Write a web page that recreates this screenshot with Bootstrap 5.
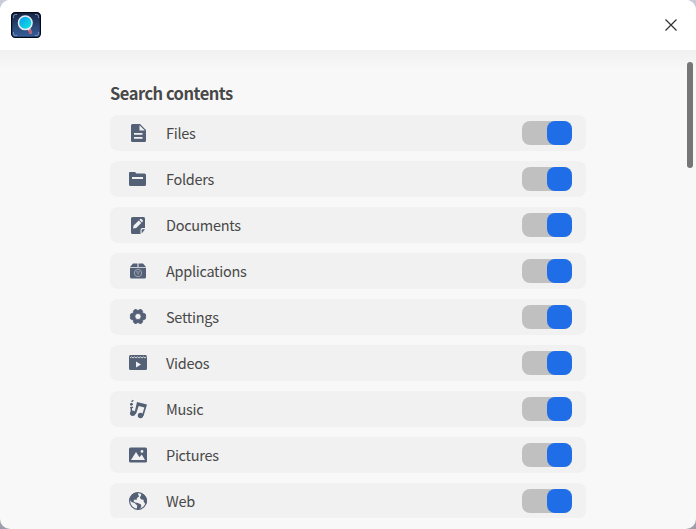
<!DOCTYPE html>
<html lang="en">
<head>
<meta charset="utf-8">
<meta name="viewport" content="width=device-width, initial-scale=1">
<title>Search settings</title>
<link href="https://cdn.jsdelivr.net/npm/bootstrap@5.3.0/dist/css/bootstrap.min.css" rel="stylesheet">
<style>
body{height:529px;background:linear-gradient(#c9cadc,#9c9eab);font-family:"Noto Sans CJK SC","Noto Sans",sans-serif;color:#484848}
.window{height:529px;border-radius:10px;background:#f8f8f8}
.titlebar{height:50px;background:#fff;padding:0 18px 0 11px}
.close-btn{width:14px;height:14px;line-height:0}
.viewport{height:468px;padding:31px 110px 0;background:linear-gradient(#f0f0f0,#f8f8f8 20px)}
.heading{font-size:16.500px;line-height:24px;height:34px;font-weight:700;letter-spacing:-.5px}
.option{height:36px;flex:none;border-radius:8px;background:#f1f1f1;padding:0 14px 0 18px;margin-bottom:10px;font-size:14.500px}
.option svg{width:20px;height:20px;fill:#536076;flex:none}
.option-name{margin-left:18px;line-height:22px;letter-spacing:-.28px}
.option .form-check-input{width:50px;height:24px;margin:0;border:0;border-radius:8px;background:#c0c0c0;box-shadow:none;appearance:none;display:flex;justify-content:flex-end}
.option .form-check-input:checked{background:#c0c0c0}
.option .form-check-input::after{content:"";width:25px;height:24px;border-radius:8px;background:#1f6ee7}
.scroll-thumb{right:3px;top:62px;width:6px;height:106px;border-radius:3px;background:#767676}
</style>
<script src="https://cdn.jsdelivr.net/npm/bootstrap@5.3.0/dist/js/bootstrap.bundle.min.js"></script>
</head>
<body class="overflow-hidden m-0">
<div class="window position-relative overflow-hidden">
<header class="titlebar d-flex align-items-center justify-content-between">
<svg width="30" height="26" viewBox="0 0 30 26" aria-hidden="true">
<defs><linearGradient id="bg" x2="0" y2="1"><stop stop-color="#172444"/><stop offset="1" stop-color="#38619c"/></linearGradient>
<linearGradient id="lens" x2="1" y2="1"><stop stop-color="#0797f2"/><stop offset="1" stop-color="#12ecdc"/></linearGradient></defs>
<rect x=".6" y=".6" width="28.8" height="24.8" rx="3.6" fill="url(#bg)" stroke="#050a18" stroke-width="1.2"/>
<path d="M2.500 6V4.500a2 2 0 0 1 2-2H6M24 2.500h1.500a2 2 0 0 1 2 2V6M2.500 20v1.500a2 2 0 0 0 2 2H6M24 23.500h1.500a2 2 0 0 0 2-2V20" fill="none" stroke="#7893bd"/>
<path d="M17.800 16.500l1.800 4" stroke="#f0a0a0" stroke-width="3" stroke-linecap="round"/>
<path d="M18.900 19l.8 1.500" stroke="#b8607c" stroke-width="3" stroke-linecap="round"/>
<circle cx="14.300" cy="10.800" r="6.800" fill="url(#lens)" stroke="#e4ebf2" stroke-width="1.500"/>
</svg>
<a class="close-btn" href="#" aria-label="Close"><svg width="14" height="14"><path d="M1.500 1.500l11 11M12.500 1.500l-11 11" stroke="#303030" stroke-width="1.200" fill="none"/></svg></a>
</header>
<main class="viewport overflow-hidden">
<h1 class="heading m-0">Search contents</h1>
<div class="d-flex flex-column">
<label class="option d-flex align-items-center"><svg viewBox="0 0 20 20"><path fill-rule="evenodd" d="M4.500 1H12l6 6v10.500a1.500 1.500 0 0 1-1.500 1.500h-12A1.500 1.500 0 0 1 3 17.500v-15A1.500 1.500 0 0 1 4.500 1zM11.500 2.200V7.500h5.300zM6 10v1.700h8.500V10zm0 4v1.700h8.500V14z"/></svg><span class="option-name">Files</span><input class="form-check-input ms-auto" type="checkbox" role="switch" checked></label>
<label class="option d-flex align-items-center"><svg viewBox="0 0 20 20"><path fill-rule="evenodd" d="M2 3h5l1.500 1.500H16.500A1.500 1.500 0 0 1 18 6v9.500a1.500 1.500 0 0 1-1.500 1.500h-14A1.500 1.500 0 0 1 1 15.500V4a1 1 0 0 1 1-1zM4 8v2h11V8z"/></svg><span class="option-name">Folders</span><input class="form-check-input ms-auto" type="checkbox" role="switch" checked></label>
<label class="option d-flex align-items-center"><svg viewBox="0 0 20 20"><path fill-rule="evenodd" d="M4.500 2h11A1.500 1.500 0 0 1 17 3.500V13h-2.500a2 2 0 0 0-2 2v4h-8A1.500 1.500 0 0 1 3 17.500v-14A1.500 1.500 0 0 1 4.500 2zM5 13.500l3.200-.6L13.300 8 10.800 5.500 5.600 10.600zM11.500 4.900l2.500 2.500.7-.8a1 1 0 0 0 0-1.300l-1.200-1.200a1 1 0 0 0-1.300 0z"/><path d="M13.700 18.500v-3.200a1 1 0 0 1 1-1H17z"/></svg><span class="option-name">Documents</span><input class="form-check-input ms-auto" type="checkbox" role="switch" checked></label>
<label class="option d-flex align-items-center"><svg viewBox="0 0 20 20"><path d="M5 2.500h4.500V6H2zM10.500 2.500H15L18 6h-7.500z"/><path d="M2 6.800h16V16a1.500 1.500 0 0 1-1.500 1.500h-13A1.500 1.500 0 0 1 2 16z"/><circle cx="10" cy="12" r="3.700" fill="none" stroke="#a3abb8" stroke-width=".9"/><path d="M8 10.800h4M10 12v2M8.400 11l1.600 1.500 1.600-1.500" fill="none" stroke="#a3abb8" stroke-width=".7"/></svg><span class="option-name">Applications</span><input class="form-check-input ms-auto" type="checkbox" role="switch" checked></label>
<label class="option d-flex align-items-center"><svg viewBox="0 0 20 20"><path fill-rule="evenodd" stroke="#536076" stroke-width=".8" d="M7 2.600q1.300-.8 1.900.5 1.100.7 2.200 0 .6-1.300 1.900-.5l1.200.8q.8.600.2 1.800.4 1.100 1.700 1.300 1.600.1 1.500 1.500v3q.1 1.400-1.500 1.500-1.300.2-1.700 1.300.6 1.200-.2 1.800l-1.200.8q-1.300.8-1.900-.5-1.100-.7-2.200 0-.6 1.300-1.900.5l-1.200-.8q-.8-.6-.2-1.800-.4-1.100-1.700-1.300-1.600-.1-1.500-1.500V8q-.1-1.400 1.500-1.500 1.300-.2 1.700-1.300-.6-1.200.2-1.800zM10 6.400a3.100 3.100 0 1 0 0 6.200 3.100 3.100 0 0 0 0-6.200z"/></svg><span class="option-name">Settings</span><input class="form-check-input ms-auto" type="checkbox" role="switch" checked></label>
<label class="option d-flex align-items-center"><svg viewBox="0 0 20 20"><path fill-rule="evenodd" d="M2.500 2h15A1.500 1.500 0 0 1 19 3.500v12a1.500 1.500 0 0 1-1.500 1.500h-15A1.500 1.500 0 0 1 1 15.500v-12A1.500 1.500 0 0 1 2.500 2zM8 8.500v6l5-3z"/><path d="M2 5L3.500 3.800 5 5l1.500-1.200L8 5l1.500-1.200L11 5l1.500-1.200L14 5l1.500-1.200L17 5l1.500-1.200" fill="none" stroke="#d8dbe0" stroke-width="1"/></svg><span class="option-name">Videos</span><input class="form-check-input ms-auto" type="checkbox" role="switch" checked></label>
<label class="option d-flex align-items-center"><svg viewBox="0 0 20 20"><path d="M9 3L19 5.500 15.500 17h-1.800l2.700-8.600-5.700-1.400L8 15H6.200z"/><circle cx="4.700" cy="14.200" r="2.700"/><circle cx="12.500" cy="16.500" r="2.700"/><path d="M3.300 12V8.500M2.200 8.700l2.800-.5M3.300 6.800V4M2 5.300h3M3.500 2.800L5.300 1.300" stroke="#536076" stroke-width="1.400" fill="none"/></svg><span class="option-name">Music</span><input class="form-check-input ms-auto" type="checkbox" role="switch" checked></label>
<label class="option d-flex align-items-center"><svg viewBox="0 0 20 20"><path fill-rule="evenodd" d="M2.500 2.500h15A1.500 1.500 0 0 1 19 4v12a1.500 1.500 0 0 1-1.500 1.500h-15A1.500 1.500 0 0 1 1 16V4a1.500 1.500 0 0 1 1.500-1.500zM3 15h14l-3.300-5.500-2.200 2.800L8 7zM14 5a1.400 1.400 0 1 0 0 2.800A1.400 1.400 0 0 0 14 5z"/></svg><span class="option-name">Pictures</span><input class="form-check-input ms-auto" type="checkbox" role="switch" checked></label>
<label class="option d-flex align-items-center"><svg viewBox="0 0 20 20"><circle cx="10" cy="10" r="8.400" fill="none" stroke="#536076" stroke-width="1.200"/><path d="M9.500 1.500C4.500 1.500 2 5 1.500 8.500l2 2.500 3 1 2.700 2.500-.5 4 2.300.2 2.300-3-.3-2.200-3-1.500-3-.5L5.500 10l1-1.500 2 .5.500-2 2-1.500zM12.500 2l.8 2-1.500 2.500 1.500 2 2.200.2.3 2.300 2.200 2.500c.8-1.500 1-3 .9-4.500-.3-3.500-3-6-6.400-7z"/></svg><span class="option-name">Web</span><input class="form-check-input ms-auto" type="checkbox" role="switch" checked></label>
</div>
</main>
<div class="scroll-thumb position-absolute"></div>
</div>
</body>
</html>
